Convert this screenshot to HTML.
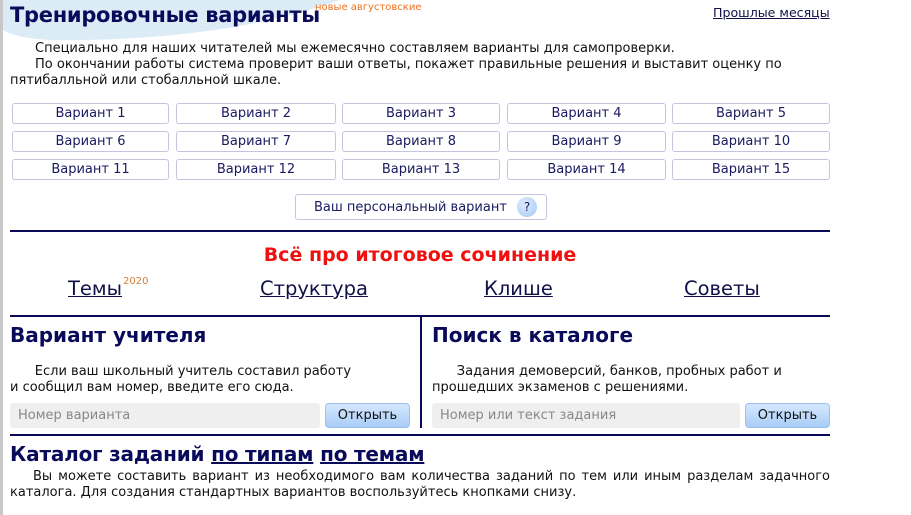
<!DOCTYPE html>
<html><head><meta charset="utf-8"><style>
*{margin:0;padding:0;box-sizing:border-box}
body{width:911px;height:515px;background:#fff;font-family:"DejaVu Sans","Liberation Sans",sans-serif;color:#111;position:relative;overflow:hidden;font-size:13px}
.a{position:absolute;white-space:nowrap}
.navy{color:#0a0a5a}
.btn{position:absolute;height:21px;border:1px solid #c4c4e0;border-radius:3px;text-align:center;line-height:20px;font-size:13px;color:#1a1a60;background:#fff}
.hr{position:absolute;left:10px;width:820px;height:2px;background:#0a0a5a}
.lnk{text-decoration:underline;color:#111148}
.inp{position:absolute;height:25px;background:#efefef;border-radius:3px;color:#888;font-size:13px;line-height:25px;padding-left:8px}
.ob{position:absolute;height:25px;border-radius:4px;background:linear-gradient(#d6e8ff,#a8cdf7);border:1px solid #9dc0ea;text-align:center;line-height:23px;font-size:13px;color:#111}
</style></head><body>
<div class="a" style="left:0;top:0;width:3px;height:515px;background:#c8c8c8"></div>
<svg class="a" style="left:0;top:0" width="340" height="50"><path d="M3 0 L340 0 Q220 42 50 40 Q15 38 3 30 Z" fill="#dcecf7"/></svg>
<div class="a navy" style="left:10px;top:3px;font-size:21px;font-weight:bold;letter-spacing:-0.3px">Тренировочные варианты</div>
<div class="a" style="left:315px;top:2px;font-size:10px;color:#f07020">новые августовские</div>
<div class="a lnk" style="left:713px;top:5px;font-size:12.6px">Прошлые месяцы</div>
<div class="a" style="left:35px;top:41px;line-height:16px">Специально для наших читателей мы ежемесячно составляем варианты для самопроверки.</div>
<div class="a" style="left:10px;top:57px;width:820px;line-height:16px;white-space:normal;text-indent:25px">По окончании работы система проверит ваши ответы, покажет правильные решения и выставит оценку по пятибалльной или стобалльной шкале.</div>

<div class="btn" style="left:12px;top:103px;width:157px">Вариант 1</div>
<div class="btn" style="left:176px;top:103px;width:160px">Вариант 2</div>
<div class="btn" style="left:342px;top:103px;width:158px">Вариант 3</div>
<div class="btn" style="left:507px;top:103px;width:159px">Вариант 4</div>
<div class="btn" style="left:672px;top:103px;width:158px">Вариант 5</div>
<div class="btn" style="left:12px;top:131px;width:157px">Вариант 6</div>
<div class="btn" style="left:176px;top:131px;width:160px">Вариант 7</div>
<div class="btn" style="left:342px;top:131px;width:158px">Вариант 8</div>
<div class="btn" style="left:507px;top:131px;width:159px">Вариант 9</div>
<div class="btn" style="left:672px;top:131px;width:158px">Вариант 10</div>
<div class="btn" style="left:12px;top:159px;width:157px">Вариант 11</div>
<div class="btn" style="left:176px;top:159px;width:160px">Вариант 12</div>
<div class="btn" style="left:342px;top:159px;width:158px">Вариант 13</div>
<div class="btn" style="left:507px;top:159px;width:159px">Вариант 14</div>
<div class="btn" style="left:672px;top:159px;width:158px">Вариант 15</div>

<div class="btn" style="left:295px;top:194px;width:252px;height:26px;line-height:25px;text-align:left;padding-left:18px">Ваш персональный вариант <span style="display:inline-block;width:20px;height:20px;border-radius:50%;background:radial-gradient(circle at 40% 35%,#e0eeff,#a2c6f2);text-align:center;line-height:20px;margin-left:6px;font-size:12px">?</span></div>

<div class="hr" style="top:230px"></div>
<div class="a" style="left:10px;width:820px;top:244px;text-align:center;font-size:19px;font-weight:bold;color:#f01010">Всё про итоговое сочинение</div>
<div class="a lnk" style="left:68px;top:277px;font-size:19.5px">Темы</div>
<div class="a" style="left:123px;top:276px;font-size:10px;color:#d08040">2020</div>
<div class="a lnk" style="left:260px;top:277px;font-size:19.5px">Структура</div>
<div class="a lnk" style="left:484px;top:277px;font-size:19.5px">Клише</div>
<div class="a lnk" style="left:684px;top:277px;font-size:19.5px">Советы</div>

<div class="hr" style="top:315px"></div>
<div class="a" style="left:420px;top:316px;width:2px;height:112px;background:#0a0a5a"></div>
<div class="a navy" style="left:10px;top:323px;font-size:20px;font-weight:bold">Вариант учителя</div>
<div class="a" style="left:10px;top:364px;line-height:16px">&nbsp;&nbsp;&nbsp;&nbsp;&nbsp;&nbsp;Если ваш школьный учитель составил работу<br>и сообщил вам номер, введите его сюда.</div>
<div class="inp" style="left:10px;top:403px;width:310px">Номер варианта</div>
<div class="ob" style="left:325px;top:403px;width:85px">Открыть</div>

<div class="a navy" style="left:432px;top:323px;font-size:20px;font-weight:bold">Поиск в каталоге</div>
<div class="a" style="left:432px;top:364px;line-height:16px">&nbsp;&nbsp;&nbsp;&nbsp;&nbsp;&nbsp;Задания демоверсий, банков, пробных работ и<br>прошедших экзаменов с решениями.</div>
<div class="inp" style="left:432px;top:403px;width:308px">Номер или текст задания</div>
<div class="ob" style="left:745px;top:403px;width:85px">Открыть</div>

<div class="hr" style="top:434px"></div>
<div class="a navy" style="left:10px;top:442px;font-size:20px;font-weight:bold;letter-spacing:-0.2px">Каталог заданий <span style="text-decoration:underline">по типам</span> <span style="text-decoration:underline">по темам</span></div>
<div class="a" style="left:10px;top:469px;width:820px;white-space:normal;line-height:16px;text-align:justify;text-indent:23px">Вы можете составить вариант из необходимого вам количества заданий по тем или иным разделам задачного каталога. Для создания стандартных вариантов воспользуйтесь кнопками снизу.</div>
</body></html>
